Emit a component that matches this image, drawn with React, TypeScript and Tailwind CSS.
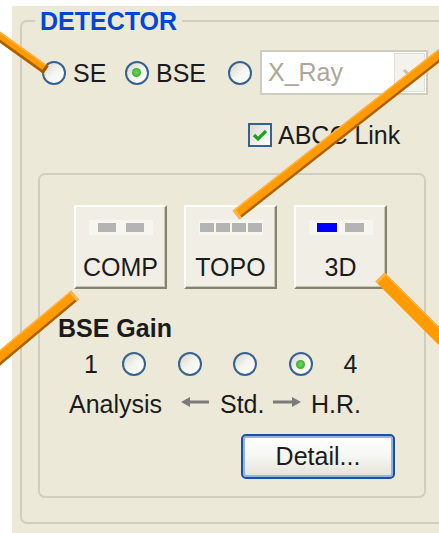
import type { ReactNode } from 'react';

type Pt = [number, number];

interface Callout {
    a: Pt;
    b: Pt;
    w: number;
    dark: boolean;
    cap: string;
}

// orange pointer lines laid over the dialog
const CALLOUTS: Callout[] = [
    { a: [46, 70], b: [-10, 30], w: 9, dark: true, cap: '#9a5a00' },
    { a: [236, 215], b: [450, 47], w: 11, dark: true, cap: '#ffb347' },
    { a: [75, 295], b: [-10, 366], w: 12, dark: true, cap: '#ffb347' },
    { a: [380, 277], b: [460, 357], w: 13, dark: false, cap: '#ffb347' },
];

function band(a: Pt, b: Pt, lo: number, hi: number) {
    const dx = b[0] - a[0];
    const dy = b[1] - a[1];
    const len = Math.hypot(dx, dy);
    let nx = -dy / len;
    let ny = dx / len;
    if (ny < 0) {
        nx = -nx;
        ny = -ny;
    }
    const pts = [
        [a[0] + nx * lo, a[1] + ny * lo],
        [b[0] + nx * lo, b[1] + ny * lo],
        [b[0] + nx * hi, b[1] + ny * hi],
        [a[0] + nx * hi, a[1] + ny * hi],
    ];
    return pts.map((p) => `${p[0].toFixed(1)},${p[1].toFixed(1)}`).join(' ');
}

function CalloutLines() {
    return (
        <svg className="pointer-events-none absolute left-0 top-0" width={439} height={533}>
            {CALLOUTS.map((c, i) => {
                const len = Math.hypot(c.b[0] - c.a[0], c.b[1] - c.a[1]);
                const capEnd: Pt = [
                    c.a[0] + ((c.b[0] - c.a[0]) / len) * 3,
                    c.a[1] + ((c.b[1] - c.a[1]) / len) * 3,
                ];
                const h = c.w / 2;
                return (
                    <g key={i}>
                        <polygon points={band(c.a, c.b, -h, h)} fill="#ff9a00" />
                        <polygon points={band(c.a, c.b, -h, -h + 1.5)} fill="#ffb441" />
                        {c.dark && <polygon points={band(c.a, c.b, h - 2.5, h)} fill="#a86100" />}
                        <polygon points={band(c.a, capEnd, -h, h)} fill={c.cap} />
                    </g>
                );
            })}
        </svg>
    );
}

function Radio({ checked = false }: { checked?: boolean }) {
    return (
        <span className="flex h-[24px] w-[24px] shrink-0 items-center justify-center rounded-full border-2 border-[#35628f] bg-linear-to-br from-[#d6d4ca] via-[#f4f4f0] to-white">
            {checked && <span className="h-[9px] w-[9px] rounded-full bg-radial from-[#6fdc5c] to-[#1f9a1f]" />}
        </span>
    );
}

function Checkbox() {
    return (
        <span className="flex h-[24px] w-[24px] shrink-0 items-center justify-center border-2 border-[#35628f] bg-linear-to-br from-[#dcdad0] to-white">
            <svg width="16" height="14" viewBox="0 0 16 14">
                <path d="M2 7 L6 11 L14 3" fill="none" stroke="#21a121" strokeWidth="3.2" />
            </svg>
        </span>
    );
}

function Arrow({ left }: { left?: boolean }) {
    return (
        <svg width="28" height="10" viewBox="0 0 28 10" className="mb-[4.6px] shrink-0">
            {left ? (
                <path d="M0 5 L9 0 L9 3.5 L28 3.5 L28 6.5 L9 6.5 L9 10 Z" fill="#7b7b7b" />
            ) : (
                <path d="M28 5 L19 0 L19 3.5 L0 3.5 L0 6.5 L19 6.5 L19 10 Z" fill="#7b7b7b" />
            )}
        </svg>
    );
}

// mode button with its little segment indicator
function ModeButton({ label, children }: { label: string; children: ReactNode }) {
    return (
        <div className="flex h-[84px] w-[93px] flex-col items-center border-2 border-t-[#fdfdfb] border-l-[#fdfdfb] border-r-[#85826f] border-b-[#85826f] bg-[#f1efe5] shadow-[inset_-1px_-1px_0_#c9c6b6]">
            <div className="mt-[13px] flex h-[15px] w-[64px] items-center justify-center bg-[#f6f5ee]">
                {children}
            </div>
            <span className="mt-[17.3px] leading-[30px]">{label}</span>
        </div>
    );
}

export default function App() {
    return (
        <div className="relative h-[533px] w-[439px] overflow-hidden bg-white font-['Liberation_Sans',Arial,sans-serif] text-[25px] text-[#1b1b1b]">
            <div className="ml-[12px] mt-[6px] h-[527px] overflow-hidden bg-[#ece9d8] pl-[8px] pt-[1.5px]">
                <fieldset className="w-[430px] rounded-[7px] border-2 border-[#d0cfbf] pb-[24px]">
                    <legend className="ml-[13px] px-[5px] text-[25px] font-bold leading-[26px] text-[#0046d5]">
                        DETECTOR
                    </legend>

                    {/* detector selection */}
                    <div className="mt-[16.5px] flex h-[45px] items-center pl-[20px]">
                        <Radio />
                        <span className="ml-[7px] leading-[30px]">SE</span>
                        <span className="ml-[18.6px]">
                            <Radio checked />
                        </span>
                        <span className="ml-[7px] leading-[30px]">BSE</span>
                        <span className="ml-[22px]">
                            <Radio />
                        </span>
                        <div className="ml-[8px] flex h-[45px] w-[168px] items-stretch border-2 border-[#cfcdc1] bg-white">
                            <span className="flex-1 pl-[6px] leading-[41px] text-[#aca899]">X_Ray</span>
                            <span className="m-[1px] flex w-[31px] items-center justify-center border border-[#e2e0d6] bg-[#f3f2ec]">
                                <svg width="14" height="10" viewBox="0 0 14 10">
                                    <path d="M2 2 L7 7 L12 2" fill="none" stroke="#c4c2b6" strokeWidth="3" />
                                </svg>
                            </span>
                        </div>
                    </div>

                    <div className="mt-[26.5px] flex h-[26px] items-center pl-[226px]">
                        <Checkbox />
                        <span className="ml-[6px] leading-[30px]">ABCC Link</span>
                    </div>

                    {/* BSE mode + gain */}
                    <div className="ml-[16px] mt-[25.5px] w-[388px] rounded-[7px] border-2 border-[#d0cfbf] pb-[17px]">
                        <div className="ml-[34px] mt-[30px] flex gap-[17px]">
                            <ModeButton label="COMP">
                                <div className="flex gap-[10px]">
                                    <span className="h-[9px] w-[18px] bg-[#b4b4b4]" />
                                    <span className="h-[9px] w-[18px] bg-[#b4b4b4]" />
                                </div>
                            </ModeButton>
                            <ModeButton label="TOPO">
                                <div className="flex gap-[2px]">
                                    <span className="h-[9px] w-[14px] bg-[#b4b4b4]" />
                                    <span className="h-[9px] w-[14px] bg-[#b4b4b4]" />
                                    <span className="h-[9px] w-[14px] bg-[#b4b4b4]" />
                                    <span className="h-[9px] w-[14px] bg-[#b4b4b4]" />
                                </div>
                            </ModeButton>
                            <ModeButton label="3D">
                                <div className="flex gap-[8px]">
                                    <span className="h-[9px] w-[20px] bg-[#0000ff]" />
                                    <span className="h-[9px] w-[19px] bg-[#b4b4b4]" />
                                </div>
                            </ModeButton>
                        </div>

                        <div className="ml-[18px] mt-[24.3px] font-bold leading-[30px]">BSE Gain</div>

                        <div className="mt-[8px] flex h-[26px] items-center">
                            <span className="ml-[44px] leading-[30px]">1</span>
                            <div className="ml-[24px] flex gap-[31.7px]">
                                <Radio />
                                <Radio />
                                <Radio />
                                <Radio checked />
                            </div>
                            <span className="ml-[30.5px] leading-[30px]">4</span>
                        </div>

                        <div className="mt-[12px] flex items-center leading-[30px]">
                            <span className="ml-[29px] w-[112px]">Analysis</span>
                            <Arrow left />
                            <span className="ml-[11px] w-[53px]">Std.</span>
                            <Arrow />
                            <span className="ml-[10px]">H.R.</span>
                        </div>

                        <button className="ml-[201px] mt-[14.7px] flex h-[45px] w-[154px] items-center justify-center rounded-[5px] border-2 border-[#1d4f9c] bg-linear-to-b from-white via-[#f6f6f2] to-[#e4e2d8] leading-[30px] text-[#1b1b1b] shadow-[inset_0_0_0_2px_#91b3e6]">
                            Detail...
                        </button>
                    </div>
                </fieldset>
            </div>
            <CalloutLines />
        </div>
    );
}
